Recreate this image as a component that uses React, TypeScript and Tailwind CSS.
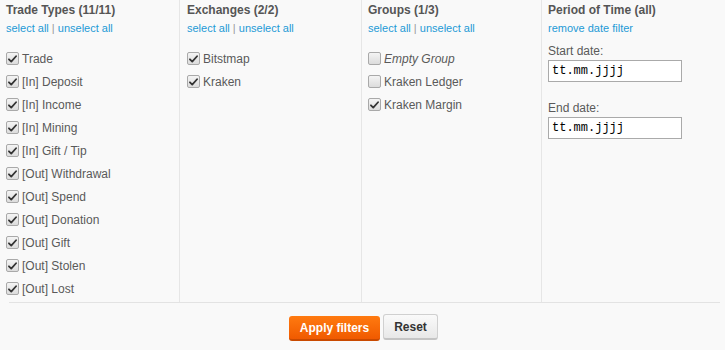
import React from "react";

const tradeTypes = [
  "Trade",
  "[In] Deposit",
  "[In] Income",
  "[In] Mining",
  "[In] Gift / Tip",
  "[Out] Withdrawal",
  "[Out] Spend",
  "[Out] Donation",
  "[Out] Gift",
  "[Out] Stolen",
  "[Out] Lost",
];

function Box({ checked }: { checked: boolean }) {
  return (
    <span className="w-[13px] h-[13px] shrink-0 rounded-[2px] border border-[#a9a9a9] bg-gradient-to-b from-[#f4f4f4] to-[#dcdcdc] flex items-center justify-center">
      {checked && (
        <svg width="9" height="8" viewBox="0 0 10 9">
          <path d="M1 4.8 L3.6 7.4 L9 1.4" fill="none" stroke="#333" strokeWidth="2" strokeLinecap="round" strokeLinejoin="round" />
        </svg>
      )}
    </span>
  );
}

function Item({ label, checked, italic }: { label: string; checked: boolean; italic?: boolean }) {
  return (
    <label className="flex items-center h-[23px] gap-[3px]">
      <Box checked={checked} />
      <span className={"text-[12px] text-[#5a5a5a] " + (italic ? "italic" : "")}>{label}</span>
    </label>
  );
}

function Head({ title, links }: { title: string; links: React.ReactNode }) {
  return (
    <div className="pt-[3px]">
      <div className="text-[12px] font-bold text-[#555] leading-[15px]">{title}</div>
      <div className="text-[11px] text-[#1e9ad6] leading-[15px] mt-[3px]">{links}</div>
    </div>
  );
}

function SelectLinks() {
  return (
    <>
      <a>select all</a> <span className="text-[#999]">|</span> <a>unselect all</a>
    </>
  );
}

export default function App() {
  return (
    <div className="w-[725px] h-[350px] bg-[#f9f9f9] font-['Liberation_Sans',Arial,sans-serif] overflow-hidden">
      <div className="grid grid-cols-[180px_182px_180px_180px] h-[302px]">
        <div className="border-r border-[#e6e6e6] pl-[6px]">
          <Head title="Trade Types (11/11)" links={<SelectLinks />} />
          <div className="mt-[11px]">
            {tradeTypes.map((t) => (
              <Item key={t} label={t} checked />
            ))}
          </div>
        </div>
        <div className="border-r border-[#e6e6e6] pl-[7px]">
          <Head title="Exchanges (2/2)" links={<SelectLinks />} />
          <div className="mt-[11px]">
            <Item label="Bitstmap" checked />
            <Item label="Kraken" checked />
          </div>
        </div>
        <div className="border-r border-[#e6e6e6] pl-[6px]">
          <Head title="Groups (1/3)" links={<SelectLinks />} />
          <div className="mt-[11px]">
            <Item label="Empty Group" checked={false} italic />
            <Item label="Kraken Ledger" checked={false} />
            <Item label="Kraken Margin" checked />
          </div>
        </div>
        <div className="pl-[6px]">
          <Head title="Period of Time (all)" links={<a>remove date filter</a>} />
          <div className="mt-[8px] text-[12px] text-[#5a5a5a] leading-[15px]">Start date:</div>
          <input
            readOnly
            value="tt.mm.jjjj"
            className="block mt-[1px] w-[134px] h-[22px] border border-[#aaa] bg-white px-[3px] text-[12px] text-black font-['Liberation_Mono',monospace] outline-none"
          />
          <div className="mt-[19px] text-[12px] text-[#5a5a5a] leading-[15px]">End date:</div>
          <input
            readOnly
            value="tt.mm.jjjj"
            className="block mt-[1px] w-[134px] h-[22px] border border-[#aaa] bg-white px-[3px] text-[12px] text-black font-['Liberation_Mono',monospace] outline-none"
          />
        </div>
      </div>
      <div className="mx-[9px] w-[711px] border-t border-[#e3e3e3]" />
      <div className="flex justify-center items-start gap-[3px] pt-[11px] pl-[2px]">
        <button className="mt-[2px] w-[91px] h-[25px] rounded-[3px] bg-gradient-to-b from-[#ff7a10] to-[#f05a00] border-b-2 border-[#c94a00] text-white text-[12px] font-bold">
          Apply filters
        </button>
        <button className="w-[55px] h-[26px] rounded-[3px] border border-[#d0d0d0] border-b-2 border-b-[#c4c4c4] bg-gradient-to-b from-[#fafafa] to-[#e8e8e8] text-[#333] text-[12px] font-bold">
          Reset
        </button>
      </div>
    </div>
  );
}
